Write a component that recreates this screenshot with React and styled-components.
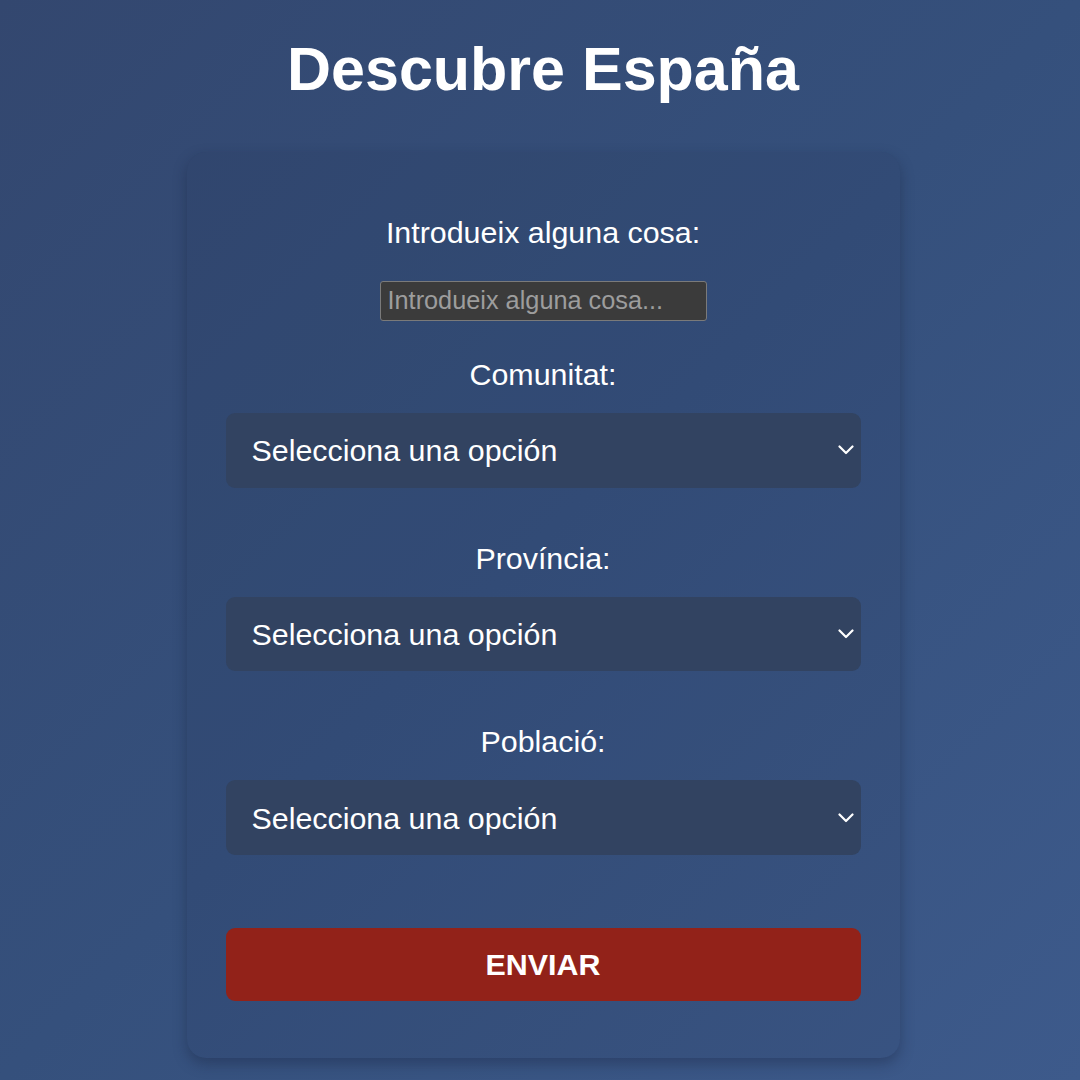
import React from 'react'
import styled, { createGlobalStyle } from 'styled-components'

const GlobalStyle = createGlobalStyle`
    html, body {
        margin: 0;
        padding: 0;
    }
    body {
        min-height: 1080px;
        background: linear-gradient(135deg, #33476f 0%, #35507c 50%, #3d5a8b 100%);
        font-family: "Liberation Sans", Arial, sans-serif;
        color: #ffffff;
    }
`;

const Page = styled.div`
    display: flex;
    flex-direction: column;
    align-items: center;
    padding: 35px 0 0 6px;
`;

const Title = styled.h1`
    margin: 0 0 49px;
    font-size: 61px;
    font-weight: 700;
    line-height: 68px;
    color: #ffffff;
`;

const Card = styled.form`
    box-sizing: border-box;
    width: 713px;
    height: 906px;
    padding: 63px 39px 57px;
    display: flex;
    flex-direction: column;
    align-items: center;
    border-radius: 19px;
    background: rgba(30, 40, 70, 0.1);
    box-shadow: 0 6px 14px rgba(20, 30, 55, 0.35);
`;

const Label = styled.label`
    font-size: 30.4px;
    line-height: 35px;
    margin-top: ${p => p.$top || 0}px;
    margin-bottom: ${p => p.$bottom || 21}px;
`;

const TextInput = styled.input`
    box-sizing: border-box;
    width: 327px;
    height: 40px;
    padding: 0 7px;
    background: #3b3b3b;
    border: 1px solid #7a7a7a;
    border-radius: 3px;
    color: #e0e0e0;
    font-family: "Liberation Sans", Arial, sans-serif;
    font-size: 25.3px;
    outline: none;
    &::placeholder {
        color: #9d9d9d;
    }
`;

const SelectWrap = styled.div`
    position: relative;
    width: 100%;
    height: 75px;
`;

const Select = styled.select`
    appearance: none;
    width: 100%;
    height: 100%;
    padding: 0 0 0 26px;
    border: none;
    border-radius: 9px;
    background: #324361;
    color: #ffffff;
    font-family: "Liberation Sans", Arial, sans-serif;
    font-size: 30.4px;
    outline: none;
`;

const Chevron = styled.svg`
    position: absolute;
    right: 7px;
    top: 50%;
    transform: translateY(-50%);
    pointer-events: none;
`;

const Button = styled.button`
    width: 100%;
    height: 73px;
    margin-top: 73px;
    border: none;
    border-radius: 9px;
    background: #922219;
    color: #ffffff;
    font-family: "Liberation Sans", Arial, sans-serif;
    font-size: 30.4px;
    font-weight: 700;
    text-transform: uppercase;
`;

const Dropdown = () => (
    <SelectWrap>
        <Select defaultValue="">
            <option value="">Selecciona una opción</option>
        </Select>
        <Chevron width="16" height="10" viewBox="0 0 16 10">
            <polyline points="1.5,1.5 8,8 14.5,1.5" fill="none" stroke="#ffffff" strokeWidth="2.2" strokeLinecap="round" strokeLinejoin="round" />
        </Chevron>
    </SelectWrap>
)

const App = () => {
    const fields = ['Comunitat:', 'Província:', 'Població:']

    return (
        <Page>
            <GlobalStyle />
            <Title>Descubre España</Title>
            <Card onSubmit={e => e.preventDefault()}>
                <Label $bottom={31}>Introdueix alguna cosa:</Label>
                <TextInput type="text" placeholder="Introdueix alguna cosa..." />
                {fields.map((f, i) => (
                    <React.Fragment key={f}>
                        <Label $top={i === 0 ? 36 : 53}>{f}</Label>
                        <Dropdown />
                    </React.Fragment>
                ))}
                <Button type="submit">Enviar</Button>
            </Card>
        </Page>
    )
}

export default App
